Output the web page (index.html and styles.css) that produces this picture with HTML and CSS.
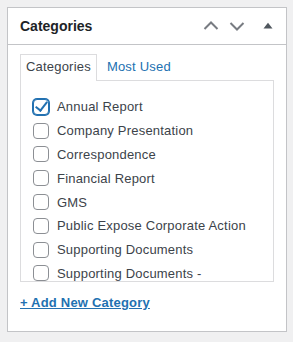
FILE: index.html
```html
<!DOCTYPE html>
<html lang="en">
<head>
  <meta charset="UTF-8">
  <meta name="viewport" content="width=device-width, initial-scale=1.0">
  <title>Categories</title>
  <link rel="stylesheet" href="styles.css">
</head>
<body>
  <div class="postbox">
    <div class="postbox-header">
      <h2>Categories</h2>
      <div class="handle-actions">
        <button class="handle-order" aria-label="Move up">
          <svg width="16" height="16" viewBox="0 0 16 16"><polyline points="1.5,11 8,4.5 14.5,11" fill="none" stroke="currentColor" stroke-width="2"/></svg>
        </button>
        <button class="handle-order" aria-label="Move down">
          <svg width="16" height="16" viewBox="0 0 16 16"><polyline points="1.5,5 8,11.5 14.5,5" fill="none" stroke="currentColor" stroke-width="2"/></svg>
        </button>
        <button class="handlediv" aria-label="Toggle panel">
          <svg width="16" height="16" viewBox="0 0 16 16"><polygon points="3.5,10.5 8,4.8 12.5,10.5" fill="currentColor"/></svg>
        </button>
      </div>
    </div>

    <div class="inside">
      <ul class="category-tabs">
        <li class="tabs">Categories</li>
        <li><a href="#">Most Used</a></li>
      </ul>

      <div class="tab-panel">
        <ul class="categorychecklist">
          <li><label><input type="checkbox" checked>Annual Report</label></li>
          <li><label><input type="checkbox">Company Presentation</label></li>
          <li><label><input type="checkbox">Correspondence</label></li>
          <li><label><input type="checkbox">Financial Report</label></li>
          <li><label><input type="checkbox">GMS</label></li>
          <li><label><input type="checkbox">Public Expose Corporate Action</label></li>
          <li><label><input type="checkbox">Supporting Documents</label></li>
          <li><label><input type="checkbox">Supporting Documents -</label></li>
        </ul>
      </div>

      <h4 class="category-adder"><a href="#">+ Add New Category</a></h4>
    </div>
  </div>
</body>
</html>
```

FILE: styles.css
```css
body {
  margin: 0;
  padding: 7px 6px 7px 7px;
  background-color: #f0f0f1;
  font-family: "Liberation Sans", Arial, sans-serif;
  font-size: 13px;
  color: #3c434a;
}
.postbox {
  width: 280px;
  box-sizing: border-box;
  background-color: #fff;
  border: 1px solid #c3c4c7;
}
.postbox-header {
  display: flex;
  align-items: center;
  height: 36px;
  border-bottom: 1px solid #c3c4c7;
}
.postbox-header h2 {
  margin: 0 auto 0 0; /* push the buttons right */
  padding-left: 12px;
  font-size: 14px;
  font-weight: bold;
  color: #1d2327;
}
.handle-actions {
  display: flex;
  height: 36px;
}
.handle-actions button {
  display: flex;
  align-items: center;
  justify-content: center;
  height: 36px;
  padding: 0;
  border: none;
  background: none;
  color: #787c82;
  cursor: pointer;
}
.handle-order {
  width: 26px;
}
.handlediv {
  width: 36px;
  color: #50575e !important;
}
.inside {
  padding: 9px 12px 12px;
}
.category-tabs {
  display: flex;
  margin: 0;
  padding: 0;
  list-style: none;
  letter-spacing: 0.2px;
}
.category-tabs li {
  position: relative;
  z-index: 1;
  margin-bottom: -1px;
  padding: 3px 5px 5px;
  line-height: 18px;
  border: 1px solid transparent;
  border-bottom: none;
}
.category-tabs li.tabs {
  border-color: #dcdcde;
  background-color: #fff;
}
.category-tabs li + li {
  margin-left: 4px;
}
.category-tabs a {
  color: #2271b1;
  text-decoration: none;
}
.tab-panel {
  height: 200px;
  overflow: hidden;
  padding: 0 12px;
  border: 1px solid #dcdcde;
  background-color: #fff;
}
.categorychecklist {
  margin: 14px 0 0;
  padding: 0;
  list-style: none;
  letter-spacing: 0.2px;
}
.categorychecklist li {
  height: 23.8px;
}
.categorychecklist label {
  display: flex;
  align-items: center;
  height: 100%;
  white-space: nowrap;
}
.categorychecklist input {
  appearance: none;
  position: relative;
  width: 16px;
  height: 16px;
  margin: 0 8px 0 0;
  border: 1px solid #8c8f94;
  border-radius: 4px;
  background-color: #fff;
  flex-shrink: 0;
}
.categorychecklist input:checked {
  border-color: #2271b1;
  box-shadow: 0 0 0 1px #2271b1;
}
.categorychecklist input:checked::before {
  content: "";
  position: absolute;
  left: 4px;
  top: -1px;
  width: 5px;
  height: 10px;
  border-right: 2.5px solid #2271b1;
  border-bottom: 2.5px solid #2271b1;
  transform: rotate(38deg);
}
.category-adder {
  margin: 12px 0 7px;
  line-height: 18px;
  font-size: 13px;
  letter-spacing: 0.2px;
}
.category-adder a {
  color: #2271b1;
  text-decoration: underline;
}
```
